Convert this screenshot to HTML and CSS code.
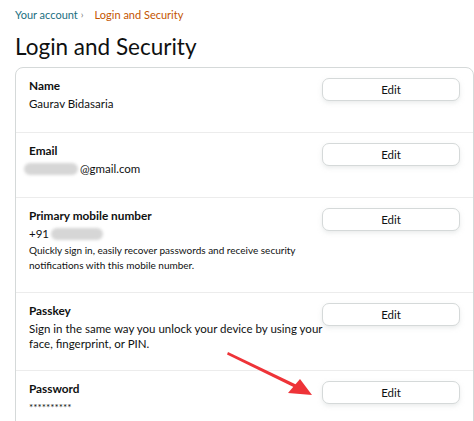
FILE: index.html
```html
<!DOCTYPE html>
<html>
<head>
<meta charset="utf-8">
<link rel="stylesheet" href="styles.css">
</head>
<body>
<div class="page">
  <nav class="breadcrumb">
    <a class="crumb-link">Your account</a>
    <span class="crumb-sep">›</span>
    <span class="crumb-current">Login and Security</span>
  </nav>
  <h1 class="title">Login and Security</h1>
  <div class="card">
    <div class="row">
      <div class="info">
        <div class="label">Name</div>
        <div class="value">Gaurav Bidasaria</div>
      </div>
      <button class="edit">Edit</button>
    </div>
    <div class="row">
      <div class="info">
        <div class="label">Email</div>
        <div class="value"><span class="blur blur-email"></span>@gmail.com</div>
      </div>
      <button class="edit">Edit</button>
    </div>
    <div class="row">
      <div class="info">
        <div class="label">Primary mobile number</div>
        <div class="value">+91<span class="blur blur-phone"></span></div>
        <div class="desc">Quickly sign in, easily recover passwords and receive security notifications with this mobile number.</div>
      </div>
      <button class="edit">Edit</button>
    </div>
    <div class="row">
      <div class="info">
        <div class="label">Passkey</div>
        <div class="desc desc-large">Sign in the same way you unlock your device by using your face, fingerprint, or PIN.</div>
      </div>
      <button class="edit">Edit</button>
    </div>
    <div class="row">
      <div class="info">
        <div class="label">Password</div>
        <div class="value stars">**********</div>
      </div>
      <button class="edit">Edit</button>
    </div>
  </div>
</div>
<svg class="arrow" width="474" height="421" viewBox="0 0 474 421">
  <polygon points="228,352 296,384.5 294.5,387.5 227,354.5" fill="#ee3338"/>
  <polygon points="312,395 288,393 300,379" fill="#ee3338"/>
</svg>
</body>
</html>
```

FILE: styles.css
```css
html, body {
  margin: 0;
  padding: 0;
  overflow: hidden;
  background: #ffffff;
}
body {
  font-family: Lato, "Noto Sans", sans-serif;
  color: #0f1111;
  width: 474px;
  height: 421px;
  position: relative;
}
.page {
  padding-left: 15px;
}
.breadcrumb {
  height: 28px;
  display: flex;
  align-items: center;
  font-size: 11px;
  gap: 3px;
}
.crumb-link {
  color: #1b6f7f;
}
.crumb-sep {
  color: #777;
  font-size: 10px;
  margin-right: 8px;
}
.crumb-current {
  color: #c45500;
}
.title {
  margin: 4px 0 5px 0;
  font-size: 22.5px;
  font-weight: 400;
  line-height: 30px;
}
.card {
  border: 1px solid #d5d9d9;
  border-radius: 8px;
  width: 459px;
  box-sizing: border-box;
}
.row {
  display: flex;
  justify-content: space-between;
  align-items: flex-start;
  padding: 9px 13px 19px 13px;
  border-top: 1px solid #ececec;
}
.row:first-child {
  border-top: none;
}
.info {
  width: 290px;
  flex: 0 0 290px;
}
.label {
  font-size: 11.8px;
  font-weight: 700;
  line-height: 18px;
}
.value {
  font-size: 11.5px;
  line-height: 18px;
  display: flex;
  align-items: center;
}
.desc {
  font-size: 10px;
  line-height: 15px;
  width: 300px;
}
.desc-large {
  font-size: 11.5px;
  margin-top: 1px;
}
.stars {
  font-size: 10px;
  letter-spacing: 0;
}
.blur {
  display: inline-block;
  height: 12px;
  background: #d6d6d6;
  border-radius: 6px;
  filter: blur(1.5px);
}
.blur-email {
  width: 54px;
  margin-left: -5px;
  margin-right: 2px;
}
.blur-phone {
  width: 52px;
  margin-left: 2px;
}
.edit {
  flex: 0 0 138px;
  width: 138px;
  height: 23px;
  margin-top: 1px;
  background: #fff;
  border: 1px solid #d5d9d9;
  border-radius: 7px;
  box-shadow: 0 2px 4px rgba(213, 217, 217, 0.5);
  font-family: inherit;
  font-size: 11.5px;
  color: #0f1111;
  padding: 0;
}
.arrow {
  position: absolute;
  left: 0;
  top: 0;
  pointer-events: none;
}
```
